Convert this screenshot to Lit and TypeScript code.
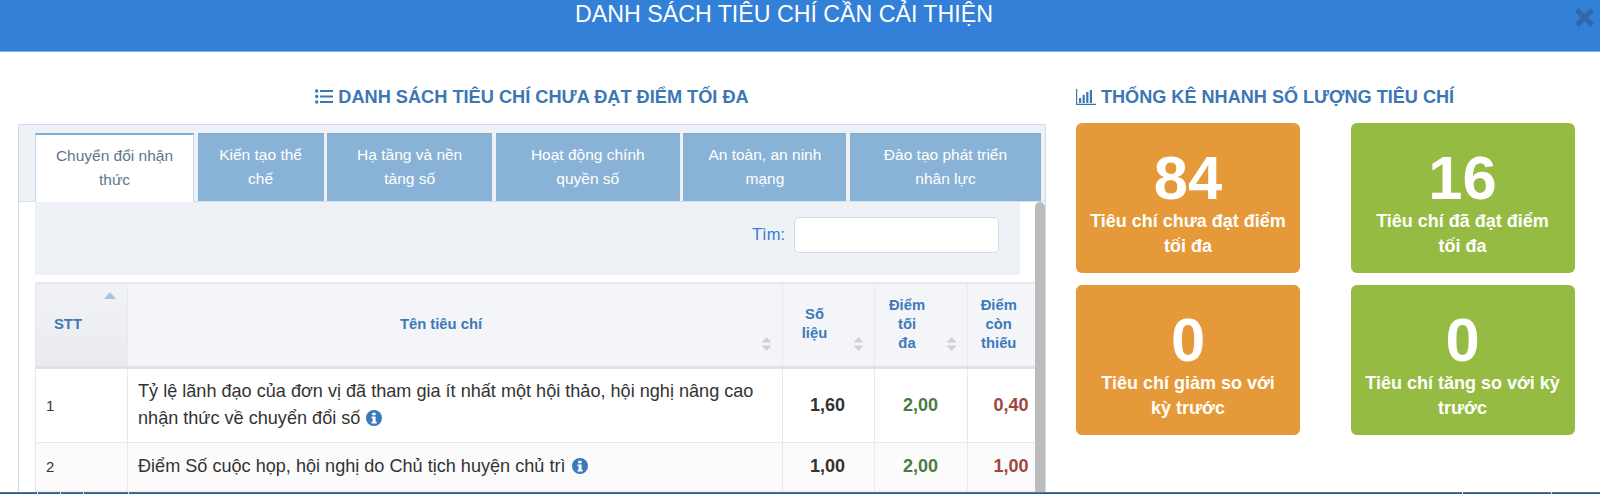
import { LitElement, html, css } from "lit";
import { customElement } from "lit/decorators.js";

const info = html`<svg class="info" viewBox="0 0 14 14"><circle cx="7" cy="7" r="7" fill="#3a7ab8"/><rect x="5.4" y="2.4" width="3" height="2.3" rx=".4" fill="#fff"/><path d="M4.8 5.7h3.6v4.6h1v1.6H4.8v-1.6h1V7.3h-1z" fill="#fff"/></svg>`;
const sortBoth = html`<svg class="sort" viewBox="0 0 11 14"><path d="M5.5 0l5 5.6H.5zM5.5 14L.5 8.4h10z" fill="#d0d1d4"/></svg>`;

const tabs = ["Chuyển đổi nhận thức", "Kiến tạo thể chế", "Hạ tầng và nền tảng số", "Hoạt động chính quyền số", "An toàn, an ninh mạng", "Đào tạo phát triển nhân lực"];
const tabWidths = [159, 126, 165, 184, 163, 191];
const ticks = [37, 60, 83, 128, 1462, 1551];
const cards = [
  ["84", "Tiêu chí chưa đạt điểm\ntối đa", "o"],
  ["16", "Tiêu chí đã đạt điểm\ntối đa", "g"],
  ["0", "Tiêu chí giảm so với\nkỳ trước", "o"],
  ["0", "Tiêu chí tăng so với kỳ\ntrước", "g"],
];

@customElement("app-root")
export class AppRoot extends LitElement {
  static styles = css`
    :host { display: block; width: 1600px; height: 494px; overflow: hidden; position: relative; background: #fff; font-family: "Liberation Sans", Arial, sans-serif; }
    * { box-sizing: border-box; }
    .top { height: 52px; background: #3380d8; border-bottom: 1px solid #79aee8; color: #fff; font-size: 23.2px; text-align: center; line-height: 29px; padding-right: 32px; }
    .close { position: absolute; right: 5px; top: 7px; width: 21px; height: 21px; }
    .main { display: flex; height: 440px; }
    .left { width: 1028px; margin-left: 18px; display: flex; flex-direction: column; }
    h2 { margin: 0; font-weight: 700; color: #3c76b4; line-height: 20px; display: flex; align-items: center; white-space: nowrap; font-size: 18.1px; }
    .left h2 { justify-content: center; height: 72px; padding: 17px 0 0 0; gap: 5px; font-size: 18.2px; }
    .right { width: 524px; margin-left: 30px; }
    .right h2 { height: 71px; padding: 19px 0 0 0; gap: 5px; }
    .panel { border: 1px solid #cddbea; border-bottom: 0; background: #fff; height: 368px; display: flex; flex-direction: column; }
    .tabbar { background: #eef1f6; height: 77px; padding: 8px 4px 0 16px; display: flex; gap: 3.6px; border-bottom: 1px solid #d5e0ec; flex: none; }
    .tab { height: 68px; background: #89b3d6; color: #fff; font-size: 15.5px; line-height: 23.5px; text-align: center; padding: 9px 15px 0; border-top: 1px solid #7ea9ce; flex: none; }
    .tab.on { background: #fff; color: #5d7690; border: 1px solid #c3d6e8; border-top: 2px solid #80afd6; border-bottom: 0; height: 69px; }
    .body { flex: 1; display: flex; min-height: 0; padding-left: 16px; }
    .content { width: 1000px; overflow: hidden; flex: none; }
    .bar { width: 10px; background: #bcbcbc; border-radius: 5px 5px 0 0; flex: none; }
    .search { height: 73px; width: 985px; background: #eef1f6; display: flex; align-items: center; justify-content: flex-end; padding: 0 21px 8px 0; gap: 9px; color: #3b7dd8; font-size: 16.5px; }
    .search .inp { width: 205px; height: 36px; background: #fff; border: 1px solid #d4dae3; border-radius: 5px; }
    table { border-collapse: collapse; table-layout: fixed; width: 1000px; margin-top: 7px; }
    th { background: #f4f5f9; color: #3c7ab9; font-size: 14.8px; font-weight: 700; line-height: 19px; height: 84px; border: 1px solid #e6e9ee; border-bottom: 3px solid #e0e1e3; border-top-width: 2px; text-align: center; position: relative; padding: 0 36px 1px 8px; }
    th.stt { background: linear-gradient(#f0f2f6, #e9ebef); text-align: left; padding-left: 18px; }
    th.last { padding: 0 14px 1px 8px; border-right: 0; }
    .sort { position: absolute; right: 10px; bottom: 15px; width: 11px; height: 14px; }
    .asc { position: absolute; right: 11px; top: 8px; width: 12px; height: 7px; }
    td { border: 1px solid #e6e9ee; color: #333; font-size: 18.1px; line-height: 27px; padding: 0 10px; height: 75px; }
    tr.r2 td { height: 49px; background: #fbfbfb; }
    td.n { font-size: 15px; }
    td.v { font-weight: 700; font-size: 18px; text-align: right; padding: 0 29px 0 0; }
    td.v.b { color: #4a7c3f; }
    td.v.c { color: #a04540; border-right: 0; padding-right: 7px; }
    .info { width: 16px; height: 16px; vertical-align: -2px; margin-left: 1px; }
    .cards { display: grid; grid-template-columns: 224px 224px; column-gap: 50.5px; row-gap: 12px; }
    .card { height: 150px; border-radius: 6px; color: #fff; text-align: center; padding: 24px 6px 0; }
    .card.o { background: #e59938; }
    .card.g { background: #95bb42; }
    .num { font-size: 61.5px; font-weight: 700; line-height: 62px; }
    .lab { font-size: 18px; font-weight: 700; line-height: 25px; white-space: pre-line; }
    .strip { position: absolute; left: 0; right: 0; bottom: 0; height: 2px; background: linear-gradient(#5d87a8, #1f4c77); }
    .tick { position: absolute; top: 0; width: 1px; height: 2px; background: #d5e4f2; }
  `;

  render() {
    return html`
      <div class="top">DANH SÁCH TIÊU CHÍ CẦN CẢI THIỆN</div>
      <svg class="close" viewBox="0 0 22 22"><path d="M5 1l6 6 6-6 4 4-6 6 6 6-4 4-6-6-6 6-4-4 6-6-6-6z" fill="#2e68ae"/></svg>
      <div class="main">
        <div class="left">
          <h2><svg width="18" height="15" viewBox="0 0 18 15" fill="#3c76b4"><circle cx="1.7" cy="2" r="1.7"/><circle cx="1.7" cy="7.5" r="1.7"/><circle cx="1.7" cy="13" r="1.7"/><rect x="5" y="1" width="13" height="2"/><rect x="5" y="6.5" width="13" height="2"/><rect x="5" y="12" width="13" height="2"/></svg>DANH SÁCH TIÊU CHÍ CHƯA ĐẠT ĐIỂM TỐI ĐA</h2>
          <div class="panel">
            <div class="tabbar">
              ${tabs.map((t, i) => html`<div class="tab ${i === 0 ? "on" : ""}" style="width:${tabWidths[i]}px">${t}</div>`)}
            </div>
            <div class="body">
              <div class="content">
                <div class="search">Tìm:<div class="inp"></div></div>
                <table>
                  <colgroup><col style="width:92px"/><col style="width:655px"/><col style="width:92px"/><col style="width:93px"/><col style="width:68px"/></colgroup>
                  <thead><tr>
                    <th class="stt">STT<svg class="asc" viewBox="0 0 12 7"><path d="M6 0l6 7H0z" fill="#a6c4e6"/></svg></th>
                    <th>Tên tiêu chí${sortBoth}</th>
                    <th>Số<br/>liệu${sortBoth}</th>
                    <th>Điểm<br/>tối<br/>đa${sortBoth}</th>
                    <th class="last">Điểm<br/>còn<br/>thiếu</th>
                  </tr></thead>
                  <tbody>
                    <tr><td class="n">1</td><td>Tỷ lệ lãnh đạo của đơn vị đã tham gia ít nhất một hội thảo, hội nghị nâng cao nhận thức về chuyển đổi số ${info}</td><td class="v a">1,60</td><td class="v b">2,00</td><td class="v c">0,40</td></tr>
                    <tr class="r2"><td class="n">2</td><td>Điểm Số cuộc họp, hội nghị do Chủ tịch huyện chủ trì ${info}</td><td class="v a">1,00</td><td class="v b">2,00</td><td class="v c">1,00</td></tr>
                  </tbody>
                </table>
              </div>
              <div class="bar"></div>
            </div>
          </div>
        </div>
        <div class="right">
          <h2><svg width="20" height="16" viewBox="0 0 20 16" fill="#3c76b4"><path d="M0 0h1.2v14.8H20V16H0z"/><rect x="3" y="9" width="2.2" height="5"/><rect x="6.6" y="6" width="2.2" height="8"/><rect x="10.2" y="3" width="2.2" height="11"/><rect x="13.8" y="1" width="2.2" height="13"/></svg>THỐNG KÊ NHANH SỐ LƯỢNG TIÊU CHÍ</h2>
          <div class="cards">
            ${cards.map(c => html`<div class="card ${c[2]}"><div class="num">${c[0]}</div><div class="lab">${c[1]}</div></div>`)}
          </div>
        </div>
      </div>
      <div class="strip">${ticks.map(x => html`<span class="tick" style="left:${x}px"></span>`)}</div>
    `;
  }
}
